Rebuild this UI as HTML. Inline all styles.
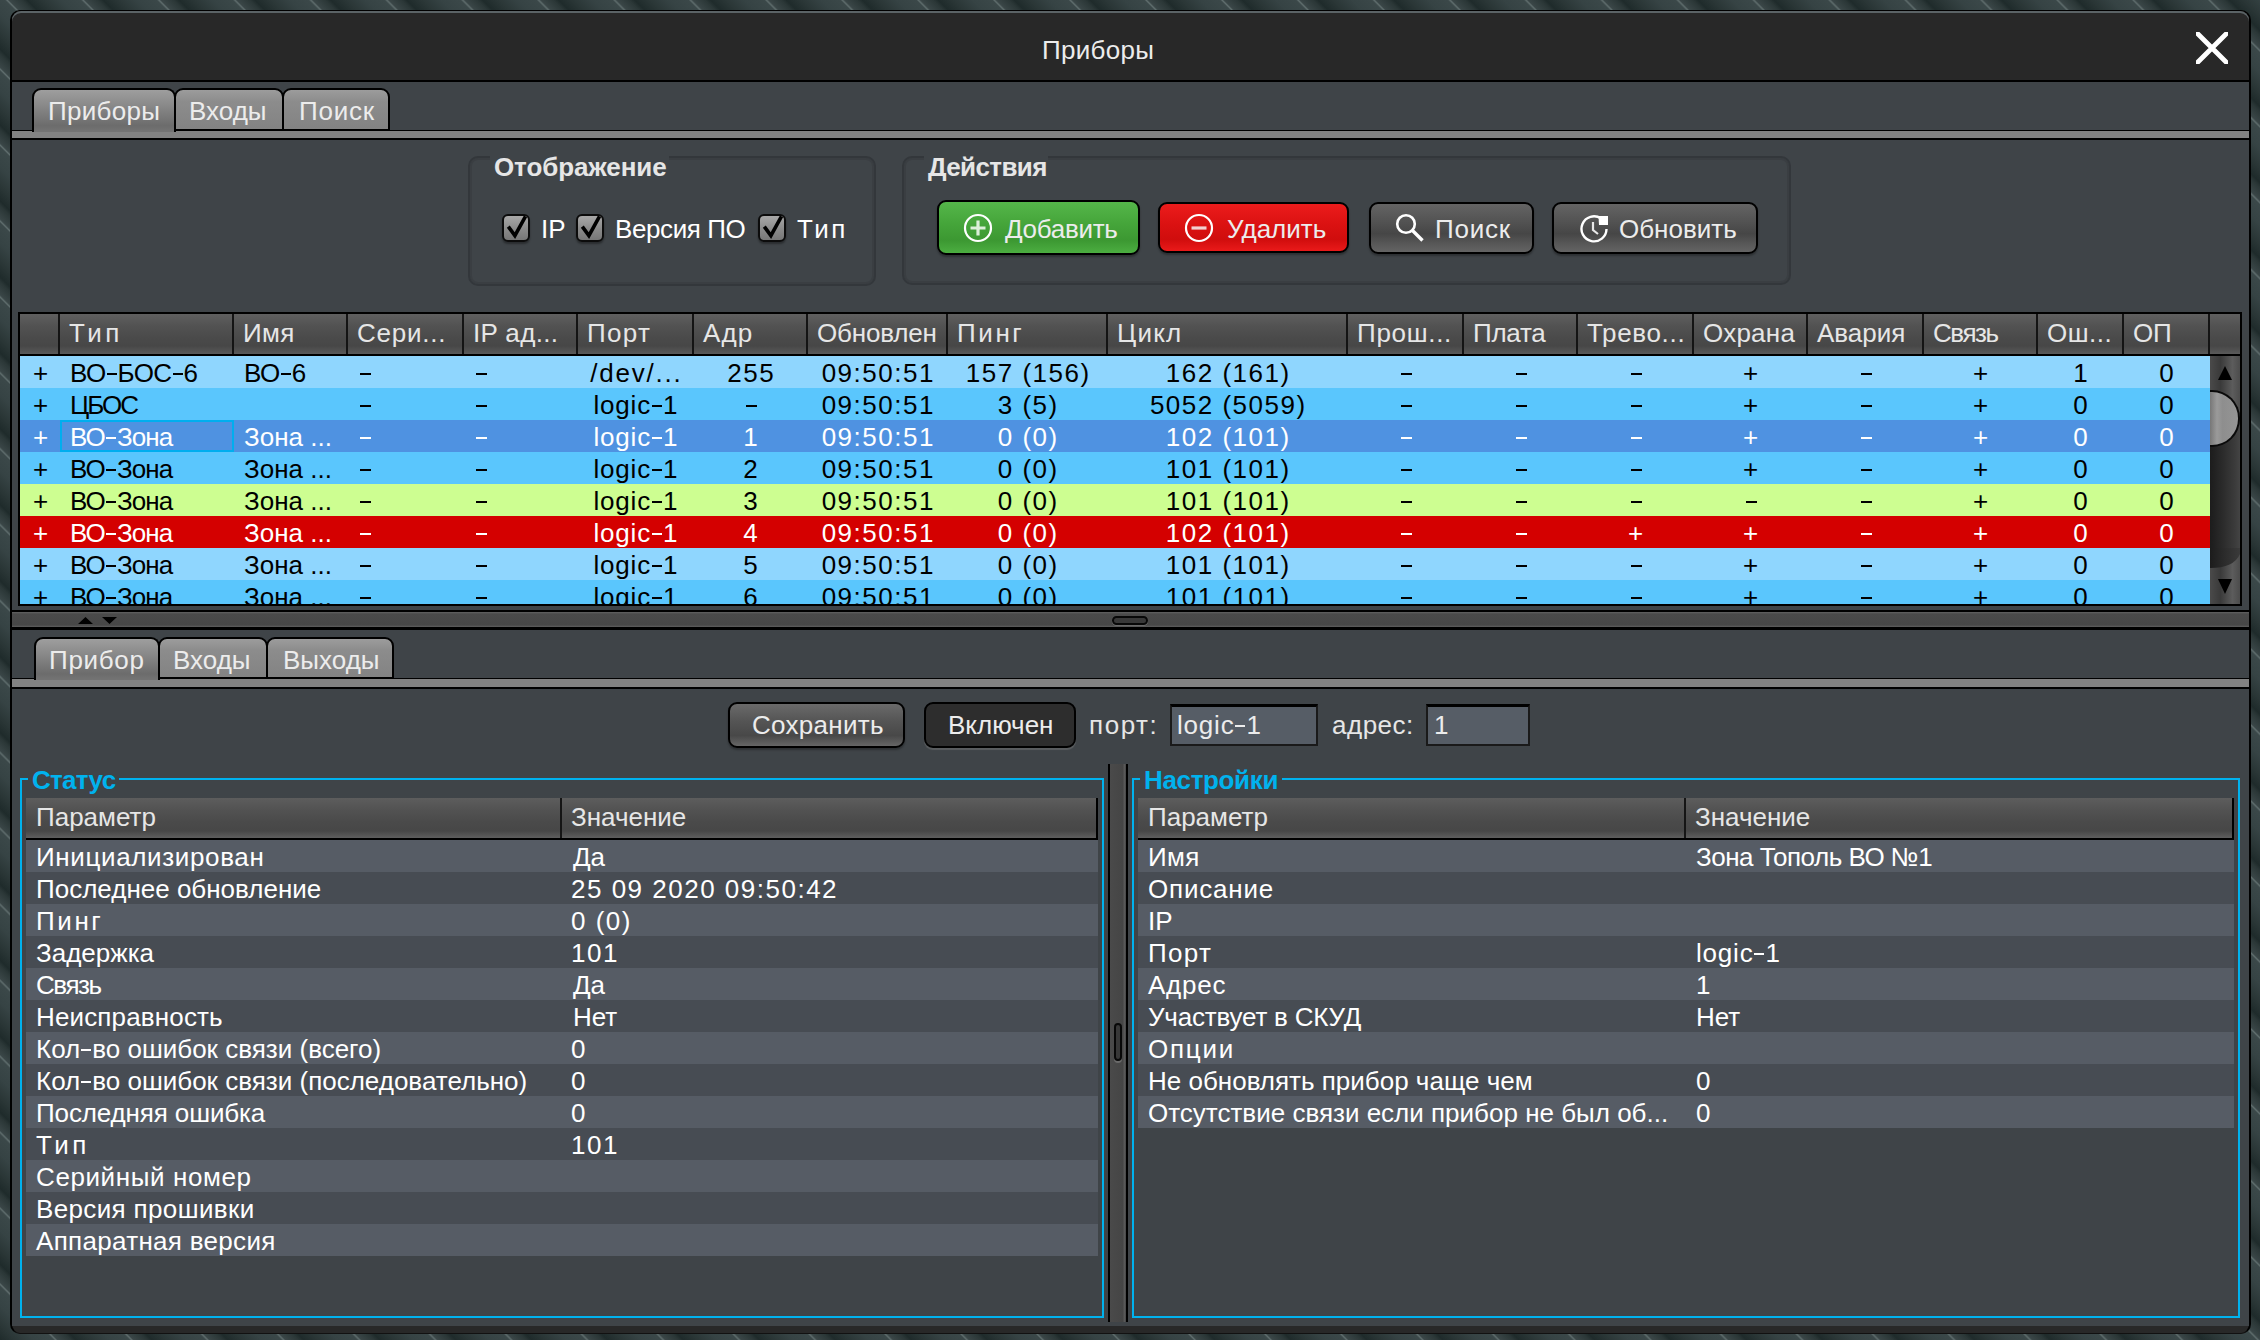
<!DOCTYPE html><html><head><meta charset="utf-8"><style>
*{margin:0;padding:0;box-sizing:border-box}
html,body{width:2260px;height:1340px;overflow:hidden}
body{position:relative;font-family:"Liberation Sans",sans-serif;font-size:26px;line-height:32px;
background-color:#313d3e;background-image:repeating-linear-gradient(45deg,#1f2b2b 0px,#2a3636 10px,#364344 24px,#3b4849 38px,#5f6d6d 39.5px,#3a4647 41px,#2b3737 50px,#1f2b2b 53.7px);}
body>div,body>svg,svg{position:absolute}
.t{white-space:pre;height:32px}
.d{display:inline-block;width:10px;height:2px;background:currentColor;vertical-align:7px;margin:0 1px 0 1px}
.d2{display:inline-block;width:11px;height:2px;background:currentColor;vertical-align:7px;margin:0 1px 0 2px}
</style></head><body><div style="left:10px;top:10px;width:2241px;height:1324px;border-radius:10px;background:#282828;border:2px solid #000;border-top:1px solid #000;border-bottom:1px solid #111"></div>
<div style="left:12px;top:11px;width:2237px;height:69px;border-radius:9px 9px 0 0;background:#282828;box-shadow:inset 0 2px 0 #5b6366"></div>
<div style="left:12px;top:80px;width:2237px;height:2px;background:#000"></div>
<div style="left:12px;top:82px;width:2237px;height:1244px;background:#3f4448"></div>
<div class="t" style="left:1042px;top:34px;color:#ececec;letter-spacing:0.3px;">Приборы</div>
<svg style="left:2196px;top:32px" width="32" height="32" viewBox="0 0 32 32"><defs><clipPath id="xc"><rect x="0" y="0" width="32" height="32"/></clipPath></defs><g clip-path="url(#xc)"><path d="M0 0 L32 32 M32 0 L0 32" stroke="#fff" stroke-width="4.8" stroke-linecap="square"/></g></svg>
<div style="left:12px;top:131px;width:2237px;height:7px;background:#828282"></div>
<div style="left:12px;top:138px;width:2237px;height:2px;background:#000"></div>
<div style="left:12px;top:130px;width:2237px;height:1px;background:#000"></div>
<div style="left:32px;top:88px;width:144px;height:44px;border:2px solid #000;border-bottom:none;border-radius:9px 9px 0 0;background:linear-gradient(#9e9e9e 0%,#8a8a8a 35%,#6c6c6c 85%,#747474 100%)"></div>
<div style="left:174px;top:88px;width:110px;height:43px;border:2px solid #000;border-radius:9px 9px 0 0;background:linear-gradient(#9c9c9c 0%,#8c8c8c 30%,#838383 100%)"></div>
<div style="left:282px;top:88px;width:108px;height:43px;border:2px solid #000;border-radius:9px 9px 0 0;background:linear-gradient(#9c9c9c 0%,#8c8c8c 30%,#838383 100%)"></div>
<div class="t" style="left:48px;top:95px;color:#ececec;letter-spacing:0.3px;">Приборы</div>
<div class="t" style="left:189px;top:95px;color:#ececec;">Входы</div>
<div class="t" style="left:299px;top:95px;color:#ececec;letter-spacing:0.75px;">Поиск</div>
<div style="left:468px;top:156px;width:408px;height:130px;border-radius:10px;border:2px solid #33373b;box-shadow:inset 0 0 0 2px #3a3e42"></div>
<div style="left:490px;top:154px;width:179px;height:8px;background:#3f4448"></div>
<div class="t" style="left:494px;top:151px;color:#e6e6e6;font-weight:bold;letter-spacing:-0.1px;">Отображение</div>
<div style="left:902px;top:156px;width:889px;height:129px;border-radius:10px;border:2px solid #33373b;box-shadow:inset 0 0 0 2px #3a3e42"></div>
<div style="left:924px;top:154px;width:124px;height:8px;background:#3f4448"></div>
<div class="t" style="left:928px;top:151px;color:#e6e6e6;font-weight:bold;letter-spacing:-0.6px;">Действия</div>
<div style="left:502px;top:214px;width:28px;height:28px;border:2px solid #0c0c0c;border-radius:6px;background:linear-gradient(#a8a8a8,#8a8a8a 55%,#777);box-shadow:0 2px 2px rgba(0,0,0,0.35)"></div>
<svg style="left:502px;top:214px" width="28" height="28" viewBox="0 0 28 28"><path d="M6.3 12.6 L12.9 21.6 L23.5 2.4" stroke="#000" stroke-width="3.6" fill="none" stroke-linejoin="miter" stroke-linecap="butt"/></svg>
<div class="t" style="left:541px;top:213px;color:#ffffff;">IP</div>
<div style="left:576px;top:214px;width:28px;height:28px;border:2px solid #0c0c0c;border-radius:6px;background:linear-gradient(#a8a8a8,#8a8a8a 55%,#777);box-shadow:0 2px 2px rgba(0,0,0,0.35)"></div>
<svg style="left:576px;top:214px" width="28" height="28" viewBox="0 0 28 28"><path d="M6.3 12.6 L12.9 21.6 L23.5 2.4" stroke="#000" stroke-width="3.6" fill="none" stroke-linejoin="miter" stroke-linecap="butt"/></svg>
<div class="t" style="left:615px;top:213px;color:#ffffff;letter-spacing:-0.4px;">Версия ПО</div>
<div style="left:758px;top:214px;width:28px;height:28px;border:2px solid #0c0c0c;border-radius:6px;background:linear-gradient(#a8a8a8,#8a8a8a 55%,#777);box-shadow:0 2px 2px rgba(0,0,0,0.35)"></div>
<svg style="left:758px;top:214px" width="28" height="28" viewBox="0 0 28 28"><path d="M6.3 12.6 L12.9 21.6 L23.5 2.4" stroke="#000" stroke-width="3.6" fill="none" stroke-linejoin="miter" stroke-linecap="butt"/></svg>
<div class="t" style="left:797px;top:213px;color:#ffffff;letter-spacing:2.5px;">Тип</div>
<div style="left:937px;top:200px;width:203px;height:55px;border:2px solid #000;border-radius:9px;background:linear-gradient(#55b64a 0%,#46a63b 40%,#3c9832 75%,#4cae41 100%);box-shadow:0 2px 2px rgba(0,0,0,0.3)"></div>
<svg style="left:963px;top:213px" width="30" height="30" viewBox="0 0 30 30"><circle cx="15" cy="15" r="13" stroke="#fff" stroke-width="2.2" fill="none"/><path d="M15 7.5 V22.5 M7.5 15 H22.5" stroke="#dcefd9" stroke-width="3.2"/></svg>
<div class="t" style="left:1005px;top:213px;color:#ececec;letter-spacing:-0.3px;">Добавить</div>
<div style="left:1158px;top:202px;width:191px;height:51px;border:2px solid #000;border-radius:9px;background:linear-gradient(#ec1c1c 0%,#dc1212 40%,#d00d0d 75%,#ea1a1a 100%);box-shadow:0 2px 2px rgba(0,0,0,0.3)"></div>
<svg style="left:1184px;top:213px" width="30" height="30" viewBox="0 0 30 30"><circle cx="15" cy="15" r="13" stroke="#fff" stroke-width="2.2" fill="none"/><path d="M7.5 15 H22.5" stroke="#f2d0d0" stroke-width="3.2"/></svg>
<div class="t" style="left:1227px;top:213px;color:#ececec;">Удалить</div>
<div style="left:1369px;top:202px;width:165px;height:52px;border:2px solid #000;border-radius:9px;background:linear-gradient(#646464 0%,#525252 38%,#464646 62%,#555 80%,#646464 100%);box-shadow:0 2px 2px rgba(0,0,0,0.3)"></div>
<svg style="left:1394px;top:213px" width="32" height="32" viewBox="0 0 32 32"><circle cx="12" cy="11" r="8.8" stroke="#fff" stroke-width="2.6" fill="none"/><path d="M18.5 17.5 L28.5 27.5" stroke="#fff" stroke-width="3.4"/></svg>
<div class="t" style="left:1435px;top:213px;color:#ececec;letter-spacing:0.75px;">Поиск</div>
<div style="left:1552px;top:202px;width:206px;height:52px;border:2px solid #000;border-radius:9px;background:linear-gradient(#646464 0%,#525252 38%,#464646 62%,#555 80%,#646464 100%);box-shadow:0 2px 2px rgba(0,0,0,0.3)"></div>
<svg style="left:1579px;top:213px" width="32" height="32" viewBox="0 0 32 32"><path d="M22 5.5 A12.5 12.5 0 1 0 27.5 16" stroke="#fff" stroke-width="2.4" fill="none"/><path d="M19.5 3 H29 V12 H20 Z" fill="#fff"/><path d="M14 9 V17 L19 21" stroke="#e8e8e8" stroke-width="2.2" fill="none"/></svg>
<div class="t" style="left:1619px;top:213px;color:#ececec;">Обновить</div>
<div style="left:18px;top:312px;width:2224px;height:294px;background:#000"></div>
<div style="left:20px;top:314px;width:2220px;height:40px;background:linear-gradient(#5f5f5f 0%,#525252 30%,#4a4a4a 60%,#474747 80%,#5a5a5a 100%)"></div>
<div style="left:58px;top:314px;width:2px;height:40px;background:#141414"></div>
<div style="left:232px;top:314px;width:2px;height:40px;background:#141414"></div>
<div style="left:346px;top:314px;width:2px;height:40px;background:#141414"></div>
<div style="left:462px;top:314px;width:2px;height:40px;background:#141414"></div>
<div style="left:576px;top:314px;width:2px;height:40px;background:#141414"></div>
<div style="left:692px;top:314px;width:2px;height:40px;background:#141414"></div>
<div style="left:806px;top:314px;width:2px;height:40px;background:#141414"></div>
<div style="left:946px;top:314px;width:2px;height:40px;background:#141414"></div>
<div style="left:1106px;top:314px;width:2px;height:40px;background:#141414"></div>
<div style="left:1346px;top:314px;width:2px;height:40px;background:#141414"></div>
<div style="left:1462px;top:314px;width:2px;height:40px;background:#141414"></div>
<div style="left:1576px;top:314px;width:2px;height:40px;background:#141414"></div>
<div style="left:1692px;top:314px;width:2px;height:40px;background:#141414"></div>
<div style="left:1806px;top:314px;width:2px;height:40px;background:#141414"></div>
<div style="left:1922px;top:314px;width:2px;height:40px;background:#141414"></div>
<div style="left:2036px;top:314px;width:2px;height:40px;background:#141414"></div>
<div style="left:2122px;top:314px;width:2px;height:40px;background:#141414"></div>
<div style="left:2208px;top:314px;width:2px;height:40px;background:#141414"></div>
<div class="t" style="left:69px;top:317px;color:#e6e6e6;letter-spacing:3.5px;">Тип</div>
<div class="t" style="left:243px;top:317px;color:#e6e6e6;letter-spacing:0.4px;">Имя</div>
<div class="t" style="left:357px;top:317px;color:#e6e6e6;letter-spacing:0.77px;">Сери...</div>
<div class="t" style="left:473px;top:317px;color:#e6e6e6;letter-spacing:0.34px;">IP ад...</div>
<div class="t" style="left:587px;top:317px;color:#e6e6e6;letter-spacing:1.33px;">Порт</div>
<div class="t" style="left:703px;top:317px;color:#e6e6e6;letter-spacing:1.15px;">Адр</div>
<div class="t" style="left:817px;top:317px;color:#e6e6e6;letter-spacing:-0.17px;">Обновлен</div>
<div class="t" style="left:957px;top:317px;color:#e6e6e6;letter-spacing:2.6px;">Пинг</div>
<div class="t" style="left:1117px;top:317px;color:#e6e6e6;letter-spacing:1.23px;">Цикл</div>
<div class="t" style="left:1357px;top:317px;color:#e6e6e6;letter-spacing:0.7px;">Прош...</div>
<div class="t" style="left:1473px;top:317px;color:#e6e6e6;letter-spacing:-0.25px;">Плата</div>
<div class="t" style="left:1587px;top:317px;color:#e6e6e6;letter-spacing:0.66px;">Трево...</div>
<div class="t" style="left:1703px;top:317px;color:#e6e6e6;letter-spacing:0.24px;">Охрана</div>
<div class="t" style="left:1817px;top:317px;color:#e6e6e6;">Авария</div>
<div class="t" style="left:1933px;top:317px;color:#e6e6e6;letter-spacing:-1.45px;">Связь</div>
<div class="t" style="left:2047px;top:317px;color:#e6e6e6;letter-spacing:0.5px;">Ош...</div>
<div class="t" style="left:2133px;top:317px;color:#e6e6e6;letter-spacing:-0.2px;">ОП</div>
<div style="left:20px;top:356px;width:2190px;height:248px;overflow:hidden">
<div style="position:absolute;left:0;top:0px;width:2190px;height:32px;background:#8fd6fe"></div>
<div class="t" style="position:absolute;left:0px;width:38px;text-align:center;top:1px;color:#000;padding-left:3px;">+</div>
<div class="t" style="position:absolute;left:50px;top:1px;color:#000;letter-spacing:-0.6px">ВО<span class="d"></span>БОС<span class="d"></span>6</div>
<div class="t" style="position:absolute;left:224px;top:1px;color:#000;letter-spacing:-0.5px">ВО<span class="d"></span>6</div>
<div class="t" style="position:absolute;left:338px;top:1px;color:#000;letter-spacing:0px"><span class="d2"></span></div>
<div class="t" style="position:absolute;left:454px;top:1px;color:#000;letter-spacing:0px"><span class="d2"></span></div>
<div class="t" style="position:absolute;left:556px;width:116px;text-align:center;top:1px;color:#000;letter-spacing:1.8px;padding-left:4.8px;">/dev/...</div>
<div class="t" style="position:absolute;left:672px;width:114px;text-align:center;top:1px;color:#000;letter-spacing:1.5px;padding-left:4.5px;">255</div>
<div class="t" style="position:absolute;left:786px;width:140px;text-align:center;top:1px;color:#000;letter-spacing:1.5px;padding-left:4.5px;">09:50:51</div>
<div class="t" style="position:absolute;left:926px;width:160px;text-align:center;top:1px;color:#000;letter-spacing:1.5px;padding-left:4.5px;">157 (156)</div>
<div class="t" style="position:absolute;left:1086px;width:240px;text-align:center;top:1px;color:#000;letter-spacing:1.5px;padding-left:4.5px;">162 (161)</div>
<div class="t" style="position:absolute;left:1326px;width:116px;text-align:center;top:1px;color:#000;padding-left:3px;"><span class="d2"></span></div>
<div class="t" style="position:absolute;left:1442px;width:114px;text-align:center;top:1px;color:#000;padding-left:3px;"><span class="d2"></span></div>
<div class="t" style="position:absolute;left:1556px;width:116px;text-align:center;top:1px;color:#000;padding-left:3px;"><span class="d2"></span></div>
<div class="t" style="position:absolute;left:1672px;width:114px;text-align:center;top:1px;color:#000;padding-left:3px;">+</div>
<div class="t" style="position:absolute;left:1786px;width:116px;text-align:center;top:1px;color:#000;padding-left:3px;"><span class="d2"></span></div>
<div class="t" style="position:absolute;left:1902px;width:114px;text-align:center;top:1px;color:#000;padding-left:3px;">+</div>
<div class="t" style="position:absolute;left:2016px;width:86px;text-align:center;top:1px;color:#000;letter-spacing:1.5px;padding-left:4.5px;">1</div>
<div class="t" style="position:absolute;left:2102px;width:86px;text-align:center;top:1px;color:#000;letter-spacing:1.5px;padding-left:4.5px;">0</div>
<div style="position:absolute;left:0;top:32px;width:2190px;height:32px;background:#5ac6fd"></div>
<div class="t" style="position:absolute;left:0px;width:38px;text-align:center;top:33px;color:#000;padding-left:3px;">+</div>
<div class="t" style="position:absolute;left:50px;top:33px;color:#000;letter-spacing:-2px">ЦБОС</div>
<div class="t" style="position:absolute;left:338px;top:33px;color:#000;letter-spacing:0px"><span class="d2"></span></div>
<div class="t" style="position:absolute;left:454px;top:33px;color:#000;letter-spacing:0px"><span class="d2"></span></div>
<div class="t" style="position:absolute;left:556px;width:116px;text-align:center;top:33px;color:#000;letter-spacing:0.8px;padding-left:3.8px;">logic<span class="d"></span>1</div>
<div class="t" style="position:absolute;left:672px;width:114px;text-align:center;top:33px;color:#000;padding-left:3px;"><span class="d2"></span></div>
<div class="t" style="position:absolute;left:786px;width:140px;text-align:center;top:33px;color:#000;letter-spacing:1.5px;padding-left:4.5px;">09:50:51</div>
<div class="t" style="position:absolute;left:926px;width:160px;text-align:center;top:33px;color:#000;letter-spacing:1.5px;padding-left:4.5px;">3 (5)</div>
<div class="t" style="position:absolute;left:1086px;width:240px;text-align:center;top:33px;color:#000;letter-spacing:1.5px;padding-left:4.5px;">5052 (5059)</div>
<div class="t" style="position:absolute;left:1326px;width:116px;text-align:center;top:33px;color:#000;padding-left:3px;"><span class="d2"></span></div>
<div class="t" style="position:absolute;left:1442px;width:114px;text-align:center;top:33px;color:#000;padding-left:3px;"><span class="d2"></span></div>
<div class="t" style="position:absolute;left:1556px;width:116px;text-align:center;top:33px;color:#000;padding-left:3px;"><span class="d2"></span></div>
<div class="t" style="position:absolute;left:1672px;width:114px;text-align:center;top:33px;color:#000;padding-left:3px;">+</div>
<div class="t" style="position:absolute;left:1786px;width:116px;text-align:center;top:33px;color:#000;padding-left:3px;"><span class="d2"></span></div>
<div class="t" style="position:absolute;left:1902px;width:114px;text-align:center;top:33px;color:#000;padding-left:3px;">+</div>
<div class="t" style="position:absolute;left:2016px;width:86px;text-align:center;top:33px;color:#000;letter-spacing:1.5px;padding-left:4.5px;">0</div>
<div class="t" style="position:absolute;left:2102px;width:86px;text-align:center;top:33px;color:#000;letter-spacing:1.5px;padding-left:4.5px;">0</div>
<div style="position:absolute;left:0;top:64px;width:2190px;height:32px;background:#4f92e1"></div>
<div class="t" style="position:absolute;left:0px;width:38px;text-align:center;top:65px;color:#fff;padding-left:3px;">+</div>
<div class="t" style="position:absolute;left:50px;top:65px;color:#fff;letter-spacing:-0.9px">ВО<span class="d"></span>Зона</div>
<div class="t" style="position:absolute;left:224px;top:65px;color:#fff;letter-spacing:0px">Зона ...</div>
<div class="t" style="position:absolute;left:338px;top:65px;color:#fff;letter-spacing:0px"><span class="d2"></span></div>
<div class="t" style="position:absolute;left:454px;top:65px;color:#fff;letter-spacing:0px"><span class="d2"></span></div>
<div class="t" style="position:absolute;left:556px;width:116px;text-align:center;top:65px;color:#fff;letter-spacing:0.8px;padding-left:3.8px;">logic<span class="d"></span>1</div>
<div class="t" style="position:absolute;left:672px;width:114px;text-align:center;top:65px;color:#fff;letter-spacing:1.5px;padding-left:4.5px;">1</div>
<div class="t" style="position:absolute;left:786px;width:140px;text-align:center;top:65px;color:#fff;letter-spacing:1.5px;padding-left:4.5px;">09:50:51</div>
<div class="t" style="position:absolute;left:926px;width:160px;text-align:center;top:65px;color:#fff;letter-spacing:1.5px;padding-left:4.5px;">0 (0)</div>
<div class="t" style="position:absolute;left:1086px;width:240px;text-align:center;top:65px;color:#fff;letter-spacing:1.5px;padding-left:4.5px;">102 (101)</div>
<div class="t" style="position:absolute;left:1326px;width:116px;text-align:center;top:65px;color:#fff;padding-left:3px;"><span class="d2"></span></div>
<div class="t" style="position:absolute;left:1442px;width:114px;text-align:center;top:65px;color:#fff;padding-left:3px;"><span class="d2"></span></div>
<div class="t" style="position:absolute;left:1556px;width:116px;text-align:center;top:65px;color:#fff;padding-left:3px;"><span class="d2"></span></div>
<div class="t" style="position:absolute;left:1672px;width:114px;text-align:center;top:65px;color:#fff;padding-left:3px;">+</div>
<div class="t" style="position:absolute;left:1786px;width:116px;text-align:center;top:65px;color:#fff;padding-left:3px;"><span class="d2"></span></div>
<div class="t" style="position:absolute;left:1902px;width:114px;text-align:center;top:65px;color:#fff;padding-left:3px;">+</div>
<div class="t" style="position:absolute;left:2016px;width:86px;text-align:center;top:65px;color:#fff;letter-spacing:1.5px;padding-left:4.5px;">0</div>
<div class="t" style="position:absolute;left:2102px;width:86px;text-align:center;top:65px;color:#fff;letter-spacing:1.5px;padding-left:4.5px;">0</div>
<div style="position:absolute;left:0;top:96px;width:2190px;height:32px;background:#5ac6fd"></div>
<div class="t" style="position:absolute;left:0px;width:38px;text-align:center;top:97px;color:#000;padding-left:3px;">+</div>
<div class="t" style="position:absolute;left:50px;top:97px;color:#000;letter-spacing:-0.9px">ВО<span class="d"></span>Зона</div>
<div class="t" style="position:absolute;left:224px;top:97px;color:#000;letter-spacing:0px">Зона ...</div>
<div class="t" style="position:absolute;left:338px;top:97px;color:#000;letter-spacing:0px"><span class="d2"></span></div>
<div class="t" style="position:absolute;left:454px;top:97px;color:#000;letter-spacing:0px"><span class="d2"></span></div>
<div class="t" style="position:absolute;left:556px;width:116px;text-align:center;top:97px;color:#000;letter-spacing:0.8px;padding-left:3.8px;">logic<span class="d"></span>1</div>
<div class="t" style="position:absolute;left:672px;width:114px;text-align:center;top:97px;color:#000;letter-spacing:1.5px;padding-left:4.5px;">2</div>
<div class="t" style="position:absolute;left:786px;width:140px;text-align:center;top:97px;color:#000;letter-spacing:1.5px;padding-left:4.5px;">09:50:51</div>
<div class="t" style="position:absolute;left:926px;width:160px;text-align:center;top:97px;color:#000;letter-spacing:1.5px;padding-left:4.5px;">0 (0)</div>
<div class="t" style="position:absolute;left:1086px;width:240px;text-align:center;top:97px;color:#000;letter-spacing:1.5px;padding-left:4.5px;">101 (101)</div>
<div class="t" style="position:absolute;left:1326px;width:116px;text-align:center;top:97px;color:#000;padding-left:3px;"><span class="d2"></span></div>
<div class="t" style="position:absolute;left:1442px;width:114px;text-align:center;top:97px;color:#000;padding-left:3px;"><span class="d2"></span></div>
<div class="t" style="position:absolute;left:1556px;width:116px;text-align:center;top:97px;color:#000;padding-left:3px;"><span class="d2"></span></div>
<div class="t" style="position:absolute;left:1672px;width:114px;text-align:center;top:97px;color:#000;padding-left:3px;">+</div>
<div class="t" style="position:absolute;left:1786px;width:116px;text-align:center;top:97px;color:#000;padding-left:3px;"><span class="d2"></span></div>
<div class="t" style="position:absolute;left:1902px;width:114px;text-align:center;top:97px;color:#000;padding-left:3px;">+</div>
<div class="t" style="position:absolute;left:2016px;width:86px;text-align:center;top:97px;color:#000;letter-spacing:1.5px;padding-left:4.5px;">0</div>
<div class="t" style="position:absolute;left:2102px;width:86px;text-align:center;top:97px;color:#000;letter-spacing:1.5px;padding-left:4.5px;">0</div>
<div style="position:absolute;left:0;top:128px;width:2190px;height:32px;background:#cdfe91"></div>
<div class="t" style="position:absolute;left:0px;width:38px;text-align:center;top:129px;color:#000;padding-left:3px;">+</div>
<div class="t" style="position:absolute;left:50px;top:129px;color:#000;letter-spacing:-0.9px">ВО<span class="d"></span>Зона</div>
<div class="t" style="position:absolute;left:224px;top:129px;color:#000;letter-spacing:0px">Зона ...</div>
<div class="t" style="position:absolute;left:338px;top:129px;color:#000;letter-spacing:0px"><span class="d2"></span></div>
<div class="t" style="position:absolute;left:454px;top:129px;color:#000;letter-spacing:0px"><span class="d2"></span></div>
<div class="t" style="position:absolute;left:556px;width:116px;text-align:center;top:129px;color:#000;letter-spacing:0.8px;padding-left:3.8px;">logic<span class="d"></span>1</div>
<div class="t" style="position:absolute;left:672px;width:114px;text-align:center;top:129px;color:#000;letter-spacing:1.5px;padding-left:4.5px;">3</div>
<div class="t" style="position:absolute;left:786px;width:140px;text-align:center;top:129px;color:#000;letter-spacing:1.5px;padding-left:4.5px;">09:50:51</div>
<div class="t" style="position:absolute;left:926px;width:160px;text-align:center;top:129px;color:#000;letter-spacing:1.5px;padding-left:4.5px;">0 (0)</div>
<div class="t" style="position:absolute;left:1086px;width:240px;text-align:center;top:129px;color:#000;letter-spacing:1.5px;padding-left:4.5px;">101 (101)</div>
<div class="t" style="position:absolute;left:1326px;width:116px;text-align:center;top:129px;color:#000;padding-left:3px;"><span class="d2"></span></div>
<div class="t" style="position:absolute;left:1442px;width:114px;text-align:center;top:129px;color:#000;padding-left:3px;"><span class="d2"></span></div>
<div class="t" style="position:absolute;left:1556px;width:116px;text-align:center;top:129px;color:#000;padding-left:3px;"><span class="d2"></span></div>
<div class="t" style="position:absolute;left:1672px;width:114px;text-align:center;top:129px;color:#000;padding-left:3px;"><span class="d2"></span></div>
<div class="t" style="position:absolute;left:1786px;width:116px;text-align:center;top:129px;color:#000;padding-left:3px;"><span class="d2"></span></div>
<div class="t" style="position:absolute;left:1902px;width:114px;text-align:center;top:129px;color:#000;padding-left:3px;">+</div>
<div class="t" style="position:absolute;left:2016px;width:86px;text-align:center;top:129px;color:#000;letter-spacing:1.5px;padding-left:4.5px;">0</div>
<div class="t" style="position:absolute;left:2102px;width:86px;text-align:center;top:129px;color:#000;letter-spacing:1.5px;padding-left:4.5px;">0</div>
<div style="position:absolute;left:0;top:160px;width:2190px;height:32px;background:#d40000"></div>
<div class="t" style="position:absolute;left:0px;width:38px;text-align:center;top:161px;color:#fff;padding-left:3px;">+</div>
<div class="t" style="position:absolute;left:50px;top:161px;color:#fff;letter-spacing:-0.9px">ВО<span class="d"></span>Зона</div>
<div class="t" style="position:absolute;left:224px;top:161px;color:#fff;letter-spacing:0px">Зона ...</div>
<div class="t" style="position:absolute;left:338px;top:161px;color:#fff;letter-spacing:0px"><span class="d2"></span></div>
<div class="t" style="position:absolute;left:454px;top:161px;color:#fff;letter-spacing:0px"><span class="d2"></span></div>
<div class="t" style="position:absolute;left:556px;width:116px;text-align:center;top:161px;color:#fff;letter-spacing:0.8px;padding-left:3.8px;">logic<span class="d"></span>1</div>
<div class="t" style="position:absolute;left:672px;width:114px;text-align:center;top:161px;color:#fff;letter-spacing:1.5px;padding-left:4.5px;">4</div>
<div class="t" style="position:absolute;left:786px;width:140px;text-align:center;top:161px;color:#fff;letter-spacing:1.5px;padding-left:4.5px;">09:50:51</div>
<div class="t" style="position:absolute;left:926px;width:160px;text-align:center;top:161px;color:#fff;letter-spacing:1.5px;padding-left:4.5px;">0 (0)</div>
<div class="t" style="position:absolute;left:1086px;width:240px;text-align:center;top:161px;color:#fff;letter-spacing:1.5px;padding-left:4.5px;">102 (101)</div>
<div class="t" style="position:absolute;left:1326px;width:116px;text-align:center;top:161px;color:#fff;padding-left:3px;"><span class="d2"></span></div>
<div class="t" style="position:absolute;left:1442px;width:114px;text-align:center;top:161px;color:#fff;padding-left:3px;"><span class="d2"></span></div>
<div class="t" style="position:absolute;left:1556px;width:116px;text-align:center;top:161px;color:#fff;padding-left:3px;">+</div>
<div class="t" style="position:absolute;left:1672px;width:114px;text-align:center;top:161px;color:#fff;padding-left:3px;">+</div>
<div class="t" style="position:absolute;left:1786px;width:116px;text-align:center;top:161px;color:#fff;padding-left:3px;"><span class="d2"></span></div>
<div class="t" style="position:absolute;left:1902px;width:114px;text-align:center;top:161px;color:#fff;padding-left:3px;">+</div>
<div class="t" style="position:absolute;left:2016px;width:86px;text-align:center;top:161px;color:#fff;letter-spacing:1.5px;padding-left:4.5px;">0</div>
<div class="t" style="position:absolute;left:2102px;width:86px;text-align:center;top:161px;color:#fff;letter-spacing:1.5px;padding-left:4.5px;">0</div>
<div style="position:absolute;left:0;top:192px;width:2190px;height:32px;background:#8fd6fe"></div>
<div class="t" style="position:absolute;left:0px;width:38px;text-align:center;top:193px;color:#000;padding-left:3px;">+</div>
<div class="t" style="position:absolute;left:50px;top:193px;color:#000;letter-spacing:-0.9px">ВО<span class="d"></span>Зона</div>
<div class="t" style="position:absolute;left:224px;top:193px;color:#000;letter-spacing:0px">Зона ...</div>
<div class="t" style="position:absolute;left:338px;top:193px;color:#000;letter-spacing:0px"><span class="d2"></span></div>
<div class="t" style="position:absolute;left:454px;top:193px;color:#000;letter-spacing:0px"><span class="d2"></span></div>
<div class="t" style="position:absolute;left:556px;width:116px;text-align:center;top:193px;color:#000;letter-spacing:0.8px;padding-left:3.8px;">logic<span class="d"></span>1</div>
<div class="t" style="position:absolute;left:672px;width:114px;text-align:center;top:193px;color:#000;letter-spacing:1.5px;padding-left:4.5px;">5</div>
<div class="t" style="position:absolute;left:786px;width:140px;text-align:center;top:193px;color:#000;letter-spacing:1.5px;padding-left:4.5px;">09:50:51</div>
<div class="t" style="position:absolute;left:926px;width:160px;text-align:center;top:193px;color:#000;letter-spacing:1.5px;padding-left:4.5px;">0 (0)</div>
<div class="t" style="position:absolute;left:1086px;width:240px;text-align:center;top:193px;color:#000;letter-spacing:1.5px;padding-left:4.5px;">101 (101)</div>
<div class="t" style="position:absolute;left:1326px;width:116px;text-align:center;top:193px;color:#000;padding-left:3px;"><span class="d2"></span></div>
<div class="t" style="position:absolute;left:1442px;width:114px;text-align:center;top:193px;color:#000;padding-left:3px;"><span class="d2"></span></div>
<div class="t" style="position:absolute;left:1556px;width:116px;text-align:center;top:193px;color:#000;padding-left:3px;"><span class="d2"></span></div>
<div class="t" style="position:absolute;left:1672px;width:114px;text-align:center;top:193px;color:#000;padding-left:3px;">+</div>
<div class="t" style="position:absolute;left:1786px;width:116px;text-align:center;top:193px;color:#000;padding-left:3px;"><span class="d2"></span></div>
<div class="t" style="position:absolute;left:1902px;width:114px;text-align:center;top:193px;color:#000;padding-left:3px;">+</div>
<div class="t" style="position:absolute;left:2016px;width:86px;text-align:center;top:193px;color:#000;letter-spacing:1.5px;padding-left:4.5px;">0</div>
<div class="t" style="position:absolute;left:2102px;width:86px;text-align:center;top:193px;color:#000;letter-spacing:1.5px;padding-left:4.5px;">0</div>
<div style="position:absolute;left:0;top:224px;width:2190px;height:32px;background:#5ac6fd"></div>
<div class="t" style="position:absolute;left:0px;width:38px;text-align:center;top:225px;color:#000;padding-left:3px;">+</div>
<div class="t" style="position:absolute;left:50px;top:225px;color:#000;letter-spacing:-0.9px">ВО<span class="d"></span>Зона</div>
<div class="t" style="position:absolute;left:224px;top:225px;color:#000;letter-spacing:0px">Зона ...</div>
<div class="t" style="position:absolute;left:338px;top:225px;color:#000;letter-spacing:0px"><span class="d2"></span></div>
<div class="t" style="position:absolute;left:454px;top:225px;color:#000;letter-spacing:0px"><span class="d2"></span></div>
<div class="t" style="position:absolute;left:556px;width:116px;text-align:center;top:225px;color:#000;letter-spacing:0.8px;padding-left:3.8px;">logic<span class="d"></span>1</div>
<div class="t" style="position:absolute;left:672px;width:114px;text-align:center;top:225px;color:#000;letter-spacing:1.5px;padding-left:4.5px;">6</div>
<div class="t" style="position:absolute;left:786px;width:140px;text-align:center;top:225px;color:#000;letter-spacing:1.5px;padding-left:4.5px;">09:50:51</div>
<div class="t" style="position:absolute;left:926px;width:160px;text-align:center;top:225px;color:#000;letter-spacing:1.5px;padding-left:4.5px;">0 (0)</div>
<div class="t" style="position:absolute;left:1086px;width:240px;text-align:center;top:225px;color:#000;letter-spacing:1.5px;padding-left:4.5px;">101 (101)</div>
<div class="t" style="position:absolute;left:1326px;width:116px;text-align:center;top:225px;color:#000;padding-left:3px;"><span class="d2"></span></div>
<div class="t" style="position:absolute;left:1442px;width:114px;text-align:center;top:225px;color:#000;padding-left:3px;"><span class="d2"></span></div>
<div class="t" style="position:absolute;left:1556px;width:116px;text-align:center;top:225px;color:#000;padding-left:3px;"><span class="d2"></span></div>
<div class="t" style="position:absolute;left:1672px;width:114px;text-align:center;top:225px;color:#000;padding-left:3px;">+</div>
<div class="t" style="position:absolute;left:1786px;width:116px;text-align:center;top:225px;color:#000;padding-left:3px;"><span class="d2"></span></div>
<div class="t" style="position:absolute;left:1902px;width:114px;text-align:center;top:225px;color:#000;padding-left:3px;">+</div>
<div class="t" style="position:absolute;left:2016px;width:86px;text-align:center;top:225px;color:#000;letter-spacing:1.5px;padding-left:4.5px;">0</div>
<div class="t" style="position:absolute;left:2102px;width:86px;text-align:center;top:225px;color:#000;letter-spacing:1.5px;padding-left:4.5px;">0</div>
<div style="position:absolute;left:40px;top:64px;width:174px;height:32px;border:2px solid #00aeef"></div>
</div>
<div style="left:2210px;top:356px;width:30px;height:248px;background:linear-gradient(90deg,#1c1c1c,#2a2a2a 40%,#3a3a3a 80%,#444 100%)"></div>
<div style="left:2210px;top:356px;width:30px;height:60px;background:linear-gradient(90deg,#4a4a4a,#3a3a3a 35%,#5c5c5c 75%,#4c4c4c)"></div>
<svg style="left:2210px;top:356px" width="30" height="36"><path d="M8 24 L15 10 L22 24 Z" fill="#000"/></svg>
<div style="left:2210px;top:390px;width:30px;height:57px;border-radius:0 28px 28px 0;border:2px solid #0a0a0a;border-left:none;background:linear-gradient(90deg,#777 0%,#9a9a9a 25%,#8e8e8e 45%,#959595 100%)"></div>
<div style="left:2210px;top:550px;width:30px;height:54px;background:linear-gradient(90deg,#4a4a4a,#3a3a3a 35%,#5c5c5c 75%,#4c4c4c)"></div>
<svg style="left:2210px;top:548px" width="30" height="24"><path d="M0 0 L30 0 L30 6 Q24 20 0 20 Z" fill="url(#trk)"/><defs><linearGradient id="trk" x1="0" x2="1"><stop offset="0" stop-color="#1c1c1c"/><stop offset="0.5" stop-color="#2c2c2c"/><stop offset="1" stop-color="#3a3a3a"/></linearGradient></defs></svg>
<svg style="left:2210px;top:552px" width="30" height="52"><path d="M8 27 L22 27 L15 42 Z" fill="#000"/></svg>
<div style="left:12px;top:610px;width:2237px;height:2px;background:#000"></div>
<div style="left:12px;top:612px;width:2237px;height:16px;background:linear-gradient(#626262 0px,#4a4a4a 2px,#474747 13px,#5e5e5e 15px,#5e5e5e 16px)"></div>
<div style="left:12px;top:627px;width:2237px;height:3px;background:#000"></div>
<svg style="left:76px;top:614px" width="44" height="12"><path d="M2 10 L9.5 3 L17 10 Z M26 3 L41 3 L33.5 10 Z" fill="#000"/></svg>
<div style="left:1112px;top:616px;width:36px;height:9px;border-radius:5px;border:2px solid #080808;background:#383838;box-shadow:0 1px 0 #6a6a6a"></div>
<div style="left:12px;top:679px;width:2237px;height:8px;background:#828282"></div>
<div style="left:12px;top:687px;width:2237px;height:2px;background:#000"></div>
<div style="left:12px;top:678px;width:2237px;height:1px;background:#000"></div>
<div style="left:34px;top:637px;width:126px;height:43px;border:2px solid #000;border-bottom:none;border-radius:9px 9px 0 0;background:linear-gradient(#9e9e9e 0%,#8a8a8a 35%,#6c6c6c 85%,#747474 100%)"></div>
<div style="left:158px;top:637px;width:110px;height:42px;border:2px solid #000;border-radius:9px 9px 0 0;background:linear-gradient(#9c9c9c 0%,#8c8c8c 30%,#838383 100%)"></div>
<div style="left:266px;top:637px;width:128px;height:42px;border:2px solid #000;border-radius:9px 9px 0 0;background:linear-gradient(#9c9c9c 0%,#8c8c8c 30%,#838383 100%)"></div>
<div class="t" style="left:49px;top:644px;color:#ececec;letter-spacing:0.7px;">Прибор</div>
<div class="t" style="left:173px;top:644px;color:#ececec;">Входы</div>
<div class="t" style="left:283px;top:644px;color:#ececec;">Выходы</div>
<div style="left:728px;top:702px;width:177px;height:46px;border:2px solid #000;border-radius:9px;background:linear-gradient(#6a6a6a 0%,#555 40%,#484848 75%,#666 100%);box-shadow:0 2px 2px rgba(0,0,0,0.3)"></div>
<div class="t" style="left:752px;top:709px;color:#ececec;letter-spacing:0.3px;">Сохранить</div>
<div style="left:924px;top:702px;width:152px;height:46px;border:2px solid #000;border-radius:9px;background:#2d2d2d;box-shadow:0 2px 1px rgba(140,140,140,0.35)"></div>
<div class="t" style="left:948px;top:709px;color:#ececec;">Включен</div>
<div class="t" style="left:1089px;top:709px;color:#e6e6e6;letter-spacing:1.55px;">порт:</div>
<div style="left:1170px;top:704px;width:148px;height:42px;border:2px solid #1a1a1a;border-top:3px solid #000;background:#565d66"></div>
<div class="t" style="left:1177px;top:709px;color:#ececec;letter-spacing:0.8px;">logic<span class="d"></span>1</div>
<div class="t" style="left:1332px;top:709px;color:#e6e6e6;letter-spacing:0.5px;">адрес:</div>
<div style="left:1426px;top:704px;width:104px;height:42px;border:2px solid #1a1a1a;border-top:3px solid #000;background:#565d66"></div>
<div class="t" style="left:1434px;top:709px;color:#ececec;">1</div>
<div style="left:1108px;top:764px;width:2px;height:558px;background:#000"></div>
<div style="left:1110px;top:764px;width:16px;height:558px;background:linear-gradient(90deg,#4a4a4a,#454545 80%,#5a5a5a 90%,#454545)"></div>
<div style="left:1126px;top:764px;width:2px;height:558px;background:#000"></div>
<div style="left:1114px;top:1023px;width:8px;height:38px;border-radius:4px;border:2px solid #080808;background:#383838;box-shadow:0 2px 0 #6a6a6a"></div>
<div style="left:20px;top:778px;width:1084px;height:540px;border:2px solid #00b2ee"></div>
<div style="left:28px;top:770px;width:91px;height:12px;background:#3f4448"></div>
<div class="t" style="left:32px;top:764px;color:#00b2ee;font-weight:bold;letter-spacing:-0.7px;">Статус</div>
<div style="left:26px;top:798px;width:1072px;height:42px;background:#000"></div>
<div style="left:26px;top:798px;width:1070px;height:40px;background:linear-gradient(#5d5d5d 0%,#525252 30%,#4a4a4a 60%,#474747 82%,#5e5e5e 100%)"></div>
<div style="left:560px;top:798px;width:2px;height:40px;background:#151515"></div>
<div class="t" style="left:36px;top:801px;color:#e6e6e6;">Параметр</div>
<div class="t" style="left:571px;top:801px;color:#e6e6e6;">Значение</div>
<div style="left:26px;top:840px;width:1072px;height:32px;background:#565c65"></div>
<div class="t" style="left:36px;top:841px;color:#ffffff;letter-spacing:0.64px;">Инициализирован</div>
<div class="t" style="left:573px;top:841px;color:#ffffff;">Да</div>
<div style="left:26px;top:872px;width:1072px;height:32px;background:#474c53"></div>
<div class="t" style="left:36px;top:873px;color:#ffffff;">Последнее обновление</div>
<div class="t" style="left:571px;top:873px;color:#ffffff;letter-spacing:1.5px;">25 09 2020 09:50:42</div>
<div style="left:26px;top:904px;width:1072px;height:32px;background:#565c65"></div>
<div class="t" style="left:36px;top:905px;color:#ffffff;letter-spacing:2.6px;">Пинг</div>
<div class="t" style="left:571px;top:905px;color:#ffffff;letter-spacing:1.5px;">0 (0)</div>
<div style="left:26px;top:936px;width:1072px;height:32px;background:#474c53"></div>
<div class="t" style="left:36px;top:937px;color:#ffffff;">Задержка</div>
<div class="t" style="left:571px;top:937px;color:#ffffff;letter-spacing:1.5px;">101</div>
<div style="left:26px;top:968px;width:1072px;height:32px;background:#565c65"></div>
<div class="t" style="left:36px;top:969px;color:#ffffff;letter-spacing:-1.45px;">Связь</div>
<div class="t" style="left:573px;top:969px;color:#ffffff;">Да</div>
<div style="left:26px;top:1000px;width:1072px;height:32px;background:#474c53"></div>
<div class="t" style="left:36px;top:1001px;color:#ffffff;letter-spacing:0.15px;">Неисправность</div>
<div class="t" style="left:573px;top:1001px;color:#ffffff;">Нет</div>
<div style="left:26px;top:1032px;width:1072px;height:32px;background:#565c65"></div>
<div class="t" style="left:36px;top:1033px;color:#ffffff;">Кол<span class="d"></span>во ошибок связи (всего)</div>
<div class="t" style="left:571px;top:1033px;color:#ffffff;letter-spacing:1.5px;">0</div>
<div style="left:26px;top:1064px;width:1072px;height:32px;background:#474c53"></div>
<div class="t" style="left:36px;top:1065px;color:#ffffff;">Кол<span class="d"></span>во ошибок связи (последовательно)</div>
<div class="t" style="left:571px;top:1065px;color:#ffffff;letter-spacing:1.5px;">0</div>
<div style="left:26px;top:1096px;width:1072px;height:32px;background:#565c65"></div>
<div class="t" style="left:36px;top:1097px;color:#ffffff;letter-spacing:-0.13px;">Последняя ошибка</div>
<div class="t" style="left:571px;top:1097px;color:#ffffff;letter-spacing:1.5px;">0</div>
<div style="left:26px;top:1128px;width:1072px;height:32px;background:#474c53"></div>
<div class="t" style="left:36px;top:1129px;color:#ffffff;letter-spacing:3.5px;">Тип</div>
<div class="t" style="left:571px;top:1129px;color:#ffffff;letter-spacing:1.5px;">101</div>
<div style="left:26px;top:1160px;width:1072px;height:32px;background:#565c65"></div>
<div class="t" style="left:36px;top:1161px;color:#ffffff;letter-spacing:0.6px;">Серийный номер</div>
<div style="left:26px;top:1192px;width:1072px;height:32px;background:#474c53"></div>
<div class="t" style="left:36px;top:1193px;color:#ffffff;letter-spacing:0.36px;">Версия прошивки</div>
<div style="left:26px;top:1224px;width:1072px;height:32px;background:#565c65"></div>
<div class="t" style="left:36px;top:1225px;color:#ffffff;letter-spacing:0.31px;">Аппаратная версия</div>
<div style="left:1132px;top:778px;width:1108px;height:540px;border:2px solid #00b2ee"></div>
<div style="left:1140px;top:770px;width:142px;height:12px;background:#3f4448"></div>
<div class="t" style="left:1144px;top:764px;color:#00b2ee;font-weight:bold;letter-spacing:-0.35px;">Настройки</div>
<div style="left:1138px;top:798px;width:1096px;height:42px;background:#000"></div>
<div style="left:1138px;top:798px;width:1094px;height:40px;background:linear-gradient(#5d5d5d 0%,#525252 30%,#4a4a4a 60%,#474747 82%,#5e5e5e 100%)"></div>
<div style="left:1684px;top:798px;width:2px;height:40px;background:#151515"></div>
<div class="t" style="left:1148px;top:801px;color:#e6e6e6;">Параметр</div>
<div class="t" style="left:1695px;top:801px;color:#e6e6e6;">Значение</div>
<div style="left:1138px;top:840px;width:1096px;height:32px;background:#565c65"></div>
<div class="t" style="left:1148px;top:841px;color:#ffffff;letter-spacing:0.4px;">Имя</div>
<div class="t" style="left:1696px;top:841px;color:#ffffff;letter-spacing:-0.5px;">Зона Тополь ВО №1</div>
<div style="left:1138px;top:872px;width:1096px;height:32px;background:#474c53"></div>
<div class="t" style="left:1148px;top:873px;color:#ffffff;letter-spacing:0.8px;">Описание</div>
<div style="left:1138px;top:904px;width:1096px;height:32px;background:#565c65"></div>
<div class="t" style="left:1148px;top:905px;color:#ffffff;">IP</div>
<div style="left:1138px;top:936px;width:1096px;height:32px;background:#474c53"></div>
<div class="t" style="left:1148px;top:937px;color:#ffffff;letter-spacing:1.33px;">Порт</div>
<div class="t" style="left:1696px;top:937px;color:#ffffff;letter-spacing:0.8px;">logic<span class="d"></span>1</div>
<div style="left:1138px;top:968px;width:1096px;height:32px;background:#565c65"></div>
<div class="t" style="left:1148px;top:969px;color:#ffffff;letter-spacing:0.75px;">Адрес</div>
<div class="t" style="left:1696px;top:969px;color:#ffffff;letter-spacing:1.5px;">1</div>
<div style="left:1138px;top:1000px;width:1096px;height:32px;background:#474c53"></div>
<div class="t" style="left:1148px;top:1001px;color:#ffffff;letter-spacing:-0.2px;">Участвует в СКУД</div>
<div class="t" style="left:1696px;top:1001px;color:#ffffff;">Нет</div>
<div style="left:1138px;top:1032px;width:1096px;height:32px;background:#565c65"></div>
<div class="t" style="left:1148px;top:1033px;color:#ffffff;letter-spacing:1.75px;">Опции</div>
<div style="left:1138px;top:1064px;width:1096px;height:32px;background:#474c53"></div>
<div class="t" style="left:1148px;top:1065px;color:#ffffff;">Не обновлять прибор чаще чем</div>
<div class="t" style="left:1696px;top:1065px;color:#ffffff;letter-spacing:1.5px;">0</div>
<div style="left:1138px;top:1096px;width:1096px;height:32px;background:#565c65"></div>
<div class="t" style="left:1148px;top:1097px;color:#ffffff;">Отсутствие связи если прибор не был об...</div>
<div class="t" style="left:1696px;top:1097px;color:#ffffff;letter-spacing:1.5px;">0</div></body></html>
